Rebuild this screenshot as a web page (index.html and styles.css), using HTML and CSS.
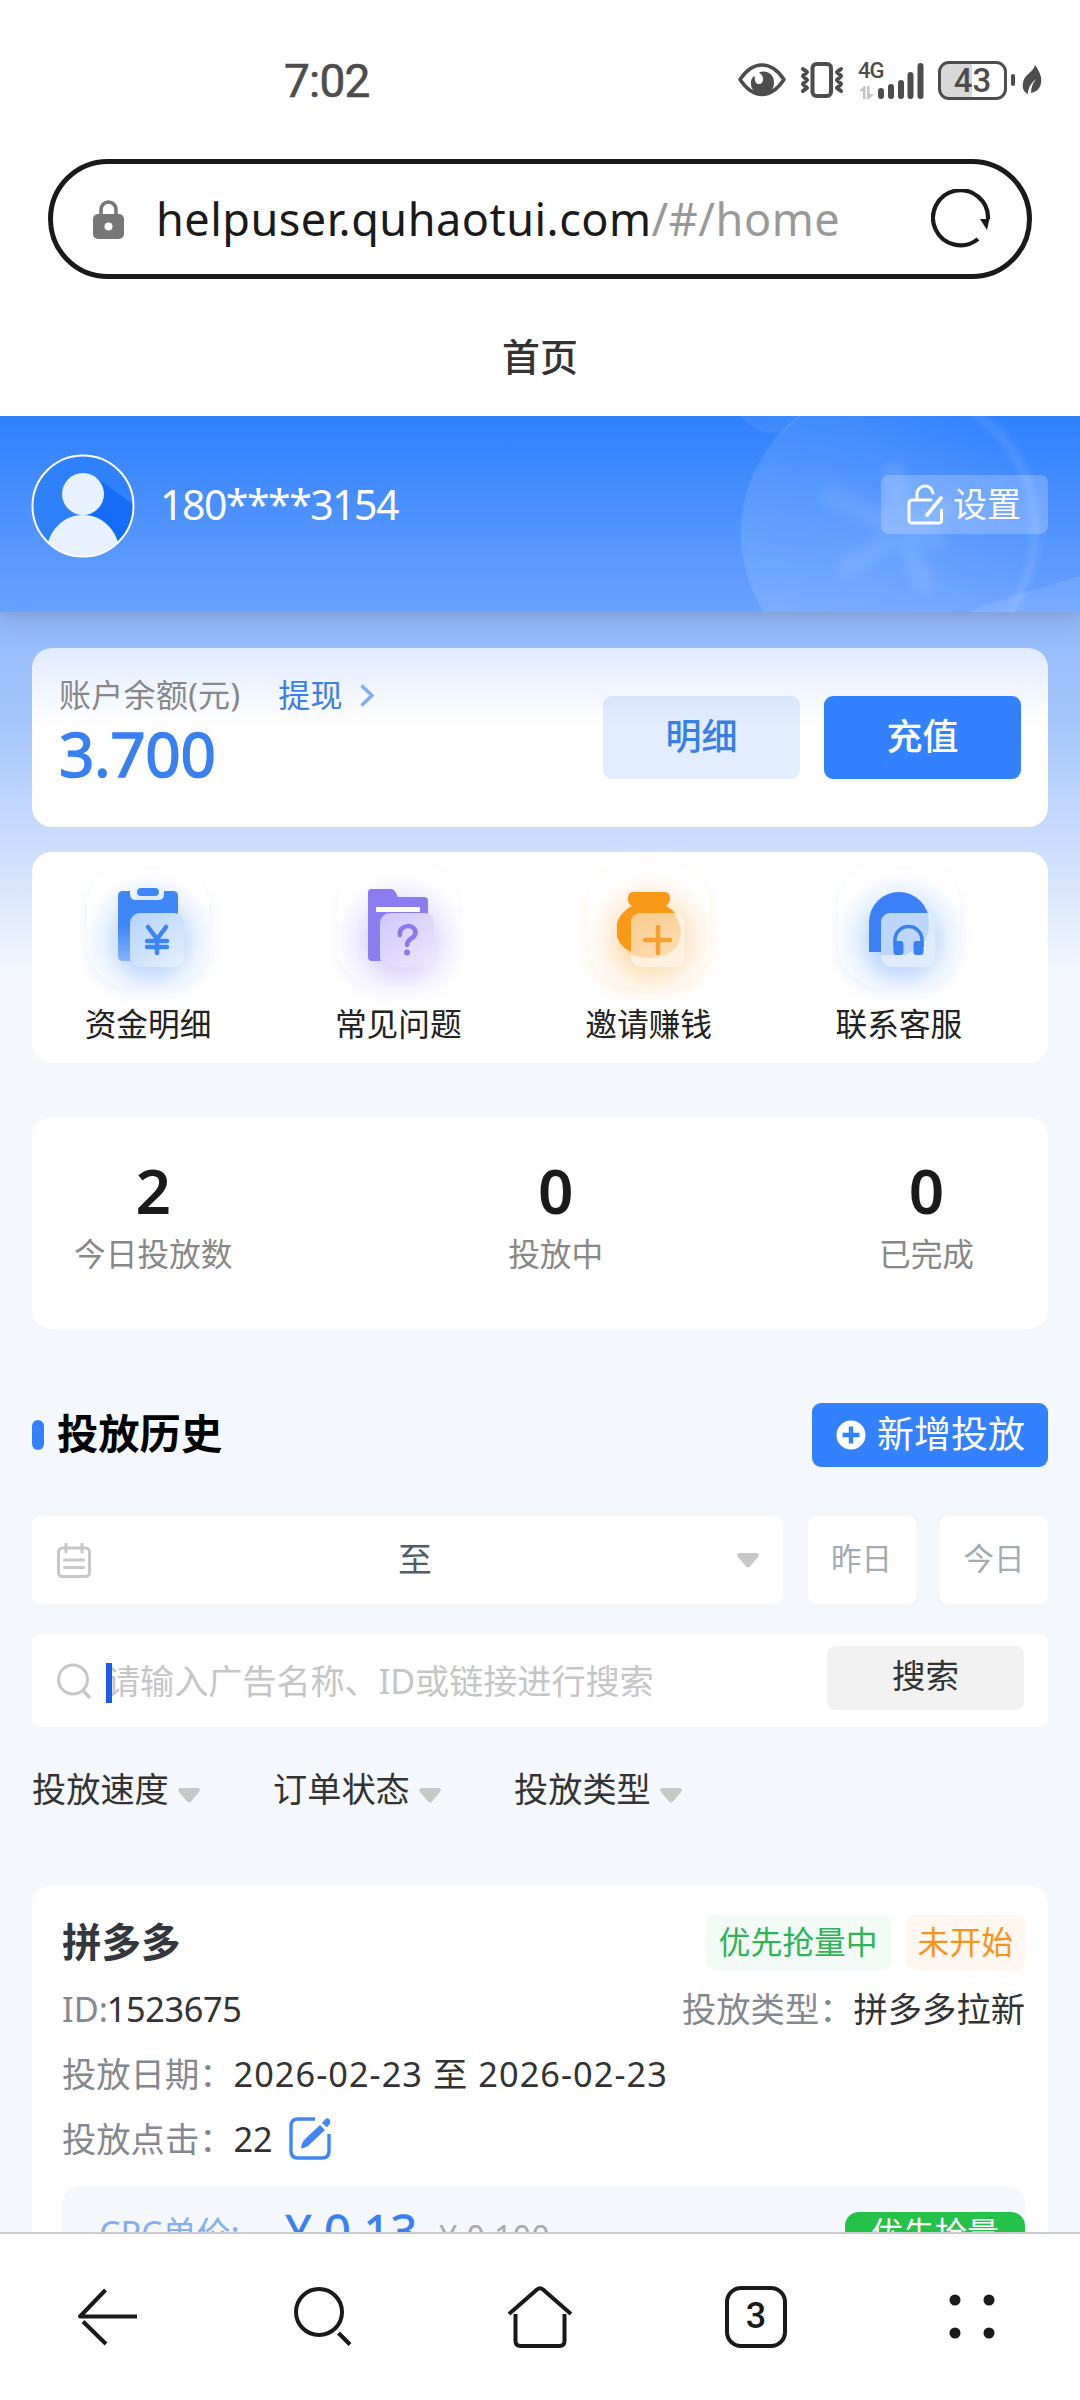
FILE: index.html
```html
<!DOCTYPE html>
<html lang="zh-CN">
<head>
<meta charset="utf-8">
<title>首页</title>
<link rel="stylesheet" href="styles.css">
</head>
<body>
<div class="screen">
  <div class="status">
    <span class="time">7:02</span>
    <div class="status-icons">
      <svg class="eye" width="48" height="34" viewBox="0 0 48 34"><path d="M2 16.5C9 6 16 2 24 2s15 4 22 14.500C39 27 32 31.500 24 31.500S9 27 2 16.500Z" fill="none" stroke="#4d4d4d" stroke-width="3.500" stroke-linejoin="round"/><path d="M21 9.500c7-3 15 1 15 10 0 8-5 12-12 12s-12-6-11-13c.5-3 2-5 4-5.500-1 5 1 8 4 8 5 0 6-8 0-11.500Z" fill="#4d4d4d"/></svg>
      <svg class="vibrate" width="44" height="36" viewBox="0 0 44 36"><g fill="none" stroke="#4d4d4d" stroke-width="4" stroke-linejoin="round" stroke-linecap="round"><rect x="12.500" y="2" width="18.500" height="32" rx="4"/><path d="M3 7l4 3-4 4 4 4-4 4 4 4-4 3M41 7l-4 3 4 4-4 4 4 4-4 4 4 3"/></g></svg>
      <div class="signal">
        <span class="net">4G</span>
        <svg width="66" height="37" viewBox="0 0 66 37"><g stroke="#4d4d4d" stroke-width="6" stroke-linecap="round"><path d="M23 29v5M33 25v9M43 21v13M52.500 13v21M62.500 4v30"/></g><path d="M5 37V29H1l5-5h1.500v13ZM9 24h2.500v8H16l-5 5H9Z" fill="#c4c4c4"/></svg>
      </div>
      <div class="battery"><span>43</span></div>
      <svg class="cell-tip" width="4" height="12" viewBox="0 0 4 12"><rect width="4" height="12" rx="2" fill="#4d4d4d"/></svg>
      <svg class="leaf" width="20" height="31" viewBox="0 0 20 31"><path d="M13 0c5 7 7 13 6 18-1 6-5 9-10 10 0-6 2-10 5-14C9 18 6 23 6 29 2 27 0 24 1 18 2 9 11 8 13 0Z" fill="#4d4d4d"/></svg>
    </div>
  </div>

  <div class="url-bar">
    <svg class="lock" width="31" height="39" viewBox="0 0 31 39"><path d="M8 16V9.500a7.500 7.500 0 0 1 15 0V16" fill="none" stroke="#777" stroke-width="3.600"/><rect x="0" y="14" width="31" height="25" rx="5" fill="#777"/><circle cx="15.500" cy="26.500" r="4" fill="#fff"/></svg>
    <span class="url">helpuser.quhaotui.com<span class="path">/#/home</span></span>
    <svg class="reload" width="60" height="60" viewBox="0 0 60 60"><path d="M47 50A27.500 27.500 0 1 1 57 30" fill="none" stroke="#1a1a1a" stroke-width="4.200"/><path d="M49 30h9.500l-2.500 11Z" fill="#1a1a1a"/></svg>
  </div>

  <div class="title">首页</div>

  <div class="user">
    <svg class="coin" width="360" height="196" viewBox="0 0 360 196">
      <defs>
        <linearGradient id="disc" x1="0" y1=".7" x2="1" y2=".3"><stop offset="0" stop-color="#fff" stop-opacity=".12"/><stop offset=".55" stop-color="#fff" stop-opacity=".08"/><stop offset="1" stop-color="#fff" stop-opacity="0"/></linearGradient>
      </defs>
      <circle cx="169" cy="117" r="148" fill="url(#disc)"/>
      <g class="rim"><path d="M205-26A143 143 0 0 1 258 228" fill="none" stroke="#fff" stroke-width="10"/></g>
      <path d="M20 0h60L62 18Q35 18 20 0Z" fill="#fff" fill-opacity=".07"/>
      <path d="M262 190L360 160V196H250Z" fill="#fff" fill-opacity=".1"/>
      <g class="star"><path d="M175 56L180 112L204 165M110 80L180 112L215 124M130 150L180 118L225 92" fill="none" stroke="#fff" stroke-width="22" stroke-linecap="round" stroke-linejoin="round"/></g>
    </svg>
    <svg class="avatar" width="104" height="104" viewBox="0 0 104 104">
      <defs><clipPath id="face"><circle cx="52" cy="52" r="50"/></clipPath></defs>
      <g clip-path="url(#face)"><rect width="104" height="104" fill="#2f80fb"/><path d="M66 24L104 52V90L86 94L52 66Z" fill="#156cf6"/><circle cx="52" cy="40" r="21" fill="#e8f1fe"/><path d="M16 92C20 74 34 61 52 61s32 13 36 31v14H16Z" fill="#e8f1fe"/></g>
      <circle cx="52" cy="52" r="50.500" fill="none" stroke="#fff" stroke-width="2"/>
    </svg>
    <span class="phone">180****3154</span>
    <div class="settings">
      <svg width="36" height="41" viewBox="0 0 36 41"><g fill="none" stroke="#fff" stroke-width="3" stroke-linecap="round" stroke-linejoin="round"><path d="M24 16H5a3 3 0 0 0-3 3v17a3 3 0 0 0 3 3h27a2.500 2.500 0 0 0 2.500-3V26M10 15.500V11a8 8 0 0 1 16-2"/><path d="M34 14L20 31" stroke-width="3.600"/></g></svg>
      <span>设置</span>
    </div>
  </div>

  <div class="content">
    <div class="card balance">
      <div class="amount">
        <div class="amount-head"><span>账户余额(元)</span><span class="withdraw">提现</span><svg width="14" height="23" viewBox="0 0 14 23"><path d="M1.500 1.500L12 11.500L1.500 21.500" fill="none" stroke="#85abf3" stroke-width="3.500"/></svg></div>
        <div class="sum">3.700</div>
      </div>
      <div class="btn light">明细</div>
      <div class="btn solid">充值</div>
    </div>

    <div class="card menu">
      <div class="menu-item blue">
        <div class="tile"><svg width="76" height="90" viewBox="0 0 76 90">
          <defs><linearGradient id="p1" x1="0" y1="0" x2=".8" y2="1"><stop offset="0" stop-color="#b4d2fd"/><stop offset="1" stop-color="#e2eefe"/></linearGradient><linearGradient id="b1" x1="0" y1="0" x2="0" y2="1"><stop offset=".5" stop-color="#3f87f6"/><stop offset="1" stop-color="#86b4fa"/></linearGradient></defs>
          <path d="M7 6H14V9q0 6 6 6h22q6 0 6-6V6H57q5 0 5 5V76H7q-5 0-5-5V11Q2 6 7 6Z" fill="url(#b1)"/><rect x="21" y="3" width="22" height="8" rx="4" fill="#3f87f6"/>
          <rect x="14" y="28" width="54" height="54" rx="10" fill="url(#p1)"/>
          <path d="M32 42L41 54L50 42M41 54V68M31 56H51M31 62H51" fill="none" stroke="#3d85f5" stroke-width="4.500" stroke-linecap="round"/></svg></div>
        <span>资金明细</span>
      </div>
      <div class="menu-item purple">
        <div class="tile"><svg width="76" height="90" viewBox="0 0 76 90">
          <defs><linearGradient id="p2" x1="0" y1="0" x2=".8" y2="1"><stop offset="0" stop-color="#cfc6fb"/><stop offset="1" stop-color="#ebe5fe"/></linearGradient></defs>
          <path d="M5 4H25q3 0 5 4l2 4H58q4 0 4 4V76H6q-4 0-4-4V8Q2 4 5 4Z" fill="#8d7cf0"/><rect x="10" y="22" width="44" height="5" rx="1" fill="#fff"/>
          <rect x="14" y="28" width="54" height="54" rx="10" fill="url(#p2)"/>
          <path d="M34 50C32 39 50 38 49.500 48C49 54 41 53 41 60" fill="none" stroke="#8a78ec" stroke-width="4.500" stroke-linecap="round"/><circle cx="41" cy="67.500" r="3" fill="#8a78ec"/></svg></div>
        <span>常见问题</span>
      </div>
      <div class="menu-item orange">
        <div class="tile"><svg width="76" height="90" viewBox="-2 0 76 90">
          <defs><linearGradient id="p3" x1="0" y1="0" x2=".7" y2="1"><stop offset="0" stop-color="#fcca8a"/><stop offset="1" stop-color="#fddcb2"/></linearGradient></defs>
          <path d="M14 7H46q5 0 5 6 0 4-4 8C58 27 63 36 63 45c0 16-13 27-32 27-4 0-9-1-13-3C6 66-3 57-3 45-3 36 2 27 13 21c-4-3-4-5-4-8q0-6 5-6Z" fill="#f89a17"/>
          <rect x="12" y="28" width="54" height="54" rx="10" fill="#fff1e0"/><path d="M22 28H55Q66 44 59 60Q51 72 32 73Q20 73 12 69V38Q12 28 22 28Z" fill="url(#p3)"/>
          <path d="M26 55H51M39 42V68" stroke="#f5a02e" stroke-width="4.500" stroke-linecap="round"/></svg></div>
        <span>邀请赚钱</span>
      </div>
      <div class="menu-item blue">
        <div class="tile"><svg width="76" height="90" viewBox="0 0 76 90">
          <path d="M2 67V37a30 30 0 0 1 60 0V67Z" fill="#3b80f4"/>
          <rect x="14" y="28" width="54" height="54" rx="10" fill="#dfebfe"/><path d="M24 28H61Q64 50 56 58L40 70H14V38Q14 28 24 28Z" fill="#b5d0fc" fill-opacity=".8"/>
          <path d="M28 62V55a13.500 13.500 0 0 1 27 0V62" fill="none" stroke="#3b80f0" stroke-width="3.500"/><path d="M26.500 56h7q3 0 3 3v8q0 3-3 3h-4q-3 0-3-3ZM56.500 56h-7q-3 0-3 3v8q0 3 3 3h4q3 0 3-3Z" fill="#3b80f0"/></svg></div>
        <span>联系客服</span>
      </div>
    </div>

    <div class="card stats">
      <div class="stat"><b>2</b><span>今日投放数</span></div>
      <div class="stat"><b>0</b><span>投放中</span></div>
      <div class="stat"><b>0</b><span>已完成</span></div>
    </div>

    <div class="section-head">
      <i class="mark"></i><h2>投放历史</h2>
      <div class="add"><svg width="30" height="30" viewBox="0 0 30 30"><circle cx="15" cy="15" r="14.500" fill="#fff"/><path d="M6.500 15h17M15 6.500v17" stroke="#3481ff" stroke-width="4.400"/></svg><span>新增投放</span></div>
    </div>

    <div class="dates">
      <div class="range">
        <svg width="34" height="35" viewBox="0 0 34 35"><g fill="none" stroke="#c8c8c8" stroke-width="3"><rect x="1.500" y="5" width="31" height="28.500" rx="4"/><path d="M9 0v9M25 0v9M7.500 17h19M7.500 24.500h19" stroke-linecap="round"/></g></svg>
        <span>至</span>
        <svg width="22" height="15" viewBox="0 0 22 15"><path d="M2 0H20q3 1 1 4L13 13.500q-2 2-4 0L1 4Q-1 1 2 0Z" fill="#c8c8c8"/></svg>
      </div>
      <div class="day">昨日</div>
      <div class="day">今日</div>
    </div>

    <div class="search">
      <svg width="34" height="36" viewBox="0 0 34 36"><g fill="none" stroke="#c8c8c8" stroke-width="3"><circle cx="16" cy="16.500" r="14.500"/><path d="M26 27.500L33 35" stroke-width="3.500"/></g></svg>
      <i class="caret"></i>
      <span class="hint">请输入广告名称、ID或链接进行搜索</span>
      <div class="go">搜索</div>
    </div>

    <div class="filters">
      <div class="filter"><span>投放速度</span><svg width="22" height="15" viewBox="0 0 22 15"><path d="M2 0H20q3 1 1 4L13 13.500q-2 2-4 0L1 4Q-1 1 2 0Z" fill="#c8c8c8"/></svg></div>
      <div class="filter"><span>订单状态</span><svg width="22" height="15" viewBox="0 0 22 15"><path d="M2 0H20q3 1 1 4L13 13.500q-2 2-4 0L1 4Q-1 1 2 0Z" fill="#c8c8c8"/></svg></div>
      <div class="filter"><span>投放类型</span><svg width="22" height="15" viewBox="0 0 22 15"><path d="M2 0H20q3 1 1 4L13 13.500q-2 2-4 0L1 4Q-1 1 2 0Z" fill="#c8c8c8"/></svg></div>
    </div>

    <div class="card order">
      <div class="order-head"><h3>拼多多</h3><span class="tag green">优先抢量中</span><span class="tag amber">未开始</span></div>
      <div class="line"><span>ID:</span><em class="id">1523675</em><span class="end">投放类型：</span><em>拼多多拉新</em></div>
      <div class="line"><span>投放日期：</span><em class="num">2026-02-23 至 2026-02-23</em></div>
      <div class="line"><span>投放点击：</span><em>22</em>
        <svg class="edit" width="42" height="43" viewBox="0 0 42 43"><g fill="none" stroke="#4086f5" stroke-width="3.400"><path d="M26 2H9Q2 2 2 9V34q0 7 7 7H33q7 0 7-7V17"/></g><path d="M31 8L36 13L19 29Q15 31 12 31.500Q12 27 15 23ZM33 6L36 2.500Q39 0 41 3Q42 6 40 8L38 10.500Z" fill="#4086f5"/></svg></div>
      <div class="price">
        <span class="cpc">CPC单价:</span><span class="now">¥ 0.13</span><span class="was">¥ 0.100</span><span class="grab">优先抢量</span>
      </div>
    </div>
  </div>

  <div class="nav">
    <div><svg width="62" height="62" viewBox="0 0 62 62"><path d="M60 30.500H3L28.500 4M6 35.500L29 58" fill="none" stroke="#1a1a1a" stroke-width="4" stroke-linejoin="round"/></svg></div>
    <div><svg width="62" height="62" viewBox="0 0 62 62"><g fill="none" stroke="#1a1a1a" stroke-width="4"><circle cx="26" cy="26" r="23"/><path d="M45.500 47L57 58.500"/></g></svg></div>
    <div><svg width="66" height="64" viewBox="0 0 66 64"><g fill="none" stroke="#1a1a1a" stroke-width="4" stroke-linejoin="round"><path d="M2 29L30 4.500q3-2.500 6 0L64 29"/><path d="M8.500 29V56q0 5 5 5h39q5 0 5-5V29"/></g></svg></div>
    <div><span class="tabs">3</span></div>
    <div><svg width="46" height="46" viewBox="0 0 46 46"><g fill="#1a1a1a"><circle cx="6" cy="6" r="5.500"/><circle cx="40" cy="6" r="5.500"/><circle cx="6" cy="39" r="5.500"/><circle cx="40" cy="39" r="5.500"/></g></svg></div>
  </div>
</div>
</body>
</html>
```
FILE: styles.css
```css
* { box-sizing: border-box; }
body { margin: 0; font-family: "Noto Sans", "Noto Sans CJK SC", sans-serif; color: #222; }
svg { display: block; flex: none; }
h2, h3 { margin: 0; }
em, i { font-style: normal; }
span { white-space: nowrap; }

.screen { width: 1080px; height: 2400px; display: flex; flex-direction: column; overflow: hidden; background: #fff; }
.screen > * { flex: none; }

.status { height: 159px; padding: 0 38px 0 284px; display: flex; justify-content: space-between; }
.time { font-family: Roboto, sans-serif; font-size: 46px; line-height: 54px; margin-top: 54px; color: #4d4d4d; letter-spacing: -.8px; -webkit-text-stroke: .6px #4d4d4d; }
.status-icons { display: flex; align-items: center; height: 40px; margin-top: 60px; color: #4d4d4d; }
.vibrate { margin-left: 14px; }
.signal { display: flex; position: relative; margin-left: 14px; }
.net { position: absolute; left: 0; top: -3px; font: 500 22px/24px Roboto, sans-serif; letter-spacing: -1px; }
.battery { width: 69px; height: 39px; margin-left: 14px; border: 3px solid #4d4d4d; border-radius: 11px; background: linear-gradient(90deg, #d8d8d8 50%, #fff 50%); text-align: center; font: 500 33px/34px Roboto, sans-serif; }
.cell-tip { margin-left: 4px; }
.leaf { margin-left: 7px; }

.url-bar { height: 120px; margin: 0 48px; padding: 0 36px 0 40px; border: 5px solid #1a1a1a; border-radius: 60px; display: flex; align-items: center; }
.url { flex: 1; margin-left: 32px; font-size: 45px; line-height: 60px; letter-spacing: .5px; color: #1a1a1a; }
.path { color: #999; }

.title { height: 137px; padding-top: 48px; text-align: center; font-size: 38px; line-height: 58px; font-weight: 500; color: #333; }

.user { position: relative; z-index: 1; height: 196px; padding: 38px 32px 0 31px; display: flex; align-items: flex-start; background: linear-gradient(#2f80ff, #6aa2ff); box-shadow: 0 4px 24px rgba(90, 100, 120, .4); clip-path: inset(0 0 -40px 0); color: #fff; }
.coin { position: absolute; right: 0; top: 0; }
.rim { opacity: .09; filter: blur(3px); }
.star { opacity: .08; filter: blur(5px); }
.phone { flex: 1; margin: 22px 0 0 25px; font-size: 41px; line-height: 56px; letter-spacing: -1.500px; }
.settings { position: relative; width: 167px; height: 59px; margin-top: 21px; padding-left: 26px; display: flex; align-items: center; gap: 10px; border-radius: 8px; background: rgba(255, 255, 255, .22); font-size: 34px; line-height: 50px; }
.settings span { margin-bottom: 2px; }

.content { height: 1620px; padding: 36px 32px 0; overflow: hidden; display: flex; flex-direction: column; background: linear-gradient(#92b9fb 0, #a5c6fc 110px, #cbddfd 230px, #f4f8fd 365px); }
.content > * { flex: none; }
.card { border-radius: 20px; background: #fff; }

.balance { height: 179px; padding: 0 27px; display: flex; align-items: center; background: linear-gradient(#e0ebff, #fff 78px); }
.amount { flex: 1; height: 131px; }
.amount-head { display: flex; align-items: center; height: 46px; font-size: 32px; line-height: 46px; letter-spacing: .3px; color: #888; }
.withdraw { margin: 0 17px 0 38px; color: #3d7fe8; }
.sum { margin-top: -2px; font-size: 62px; line-height: 74px; letter-spacing: -.4px; color: #3a80f2; -webkit-text-stroke: 1.500px #3a80f2; }
.btn { width: 197px; height: 83px; border-radius: 9px; text-align: center; font-size: 36px; line-height: 81px; font-weight: 500; }
.light { background: rgba(52, 129, 255, .14); color: #3a7fe8; }
.solid { margin-left: 24px; background: #3481ff; color: #fff; }

.menu { height: 211px; margin-top: 25px; display: flex; gap: 18.300px; }
.menu-item { width: 232px; padding-top: 11px; display: flex; flex-direction: column; align-items: center; font-size: 31.700px; line-height: 46px; }
.tile { width: 122px; height: 124px; margin-bottom: 14px; padding: 22px 0 0 29px; border-radius: 44px; }
.blue .tile { background: radial-gradient(circle at 52% 62%, #c4dbfe 28%, #e9f2ff 48%, #fff 68%); box-shadow: 0 6px 14px rgba(63, 135, 246, .12); }
.purple .tile { background: radial-gradient(circle at 52% 62%, #ddd6fd 26%, #f3f0ff 48%, #fff 68%); box-shadow: 0 6px 14px rgba(147, 125, 240, .1); }
.orange .tile { background: radial-gradient(circle at 52% 62%, #fde0bb 26%, #fff4e8 48%, #fff 68%); box-shadow: 0 6px 14px rgba(248, 154, 23, .14); }

.stats { height: 212px; margin-top: 54px; padding: 36px 74px 0 42px; display: flex; justify-content: space-between; }
.stat { display: flex; flex-direction: column; align-items: center; font-size: 31.700px; line-height: 46px; color: #888; }
.stat b { font-size: 62px; line-height: 74px; font-weight: 600; margin-bottom: 4px; color: #1a1a1a; }

.section-head { height: 64px; margin-top: 74px; display: flex; align-items: center; }
.mark { width: 12px; height: 30px; border-radius: 6px; background: #3481ff; }
.section-head h2 { flex: 1; margin: 0 0 4px 13px; font-size: 41.300px; line-height: 62px; font-weight: 600; color: #000; }
.add { width: 236px; height: 64px; padding-left: 24px; display: flex; align-items: center; gap: 11px; border-radius: 9px; background: #3481ff; color: #fff; font-size: 37px; line-height: 60px; }
.add span { margin-bottom: 3px; }

.dates { height: 88px; margin-top: 49px; display: flex; gap: 24.500px; }
.range { flex: 1; padding: 0 24px 0 25px; display: flex; align-items: center; justify-content: space-between; border-radius: 9px; background: #fff; font-size: 34px; color: #515c68; }
.range span { margin: 0 0 3px 2px; line-height: 50px; }
.day { width: 108px; border-radius: 9px; background: #fff; text-align: center; font-size: 30.500px; line-height: 85px; color: #a3abb3; }

.search { height: 93px; margin-top: 30px; padding: 0 24px 0 25px; display: flex; align-items: center; border-radius: 9px; background: #fff; }
.caret { width: 6px; height: 40px; margin: 5px 0 0 15px; background: #1c5cec; position: relative; z-index: 1; }
.hint { flex: 1; margin-left: -6px; font-size: 34.200px; line-height: 50px; letter-spacing: -.1px; color: #c6c6c6; }
.go { width: 197px; height: 64px; margin-bottom: 5px; border-radius: 8px; background: #f2f2f2; text-align: center; font-size: 33.500px; line-height: 58px; color: #333; }

.filters { height: 50px; margin-top: 37px; display: flex; }
.filter { width: 241px; display: flex; align-items: center; gap: 9px; font-size: 34.200px; line-height: 50px; color: #333; }
.filter svg { margin-top: 12px; }

.order { height: 480px; margin-top: 71px; padding: 30px 23px 0 30px; }
.order-head { height: 55px; display: flex; align-items: center; gap: 15px; }
.order-head h3 { flex: 1; font-size: 39.500px; line-height: 53px; font-weight: 600; color: #35373f; }
.tag { height: 55px; padding: 0 13px; border-radius: 8px; font-size: 31.800px; line-height: 54px; }
.tag.green { background: #f3fbf6; color: #2fb457; }
.tag.amber { padding: 0 12px; background: #fff7f0; color: #f7941d; }
.line { height: 65px; display: flex; align-items: center; font-size: 34.300px; line-height: 50px; color: #858890; }
.order-head + .line { margin-top: 6px; }
.line em { color: #333; }
.line .id { margin-left: -1px; letter-spacing: -.4px; }
.line .num { letter-spacing: 1.050px; }
.end { margin-left: auto; }
.edit { margin-left: 16px; }
.price { height: 180px; margin-top: 15px; padding: 22px 0 0 37px; display: flex; border-radius: 18px; background: #f4f7fc; }
.cpc { width: 186px; font-size: 34px; line-height: 50px; color: #85aff0; }
.now { width: 154px; font-size: 47px; line-height: 46px; color: #3a80f2; -webkit-text-stroke: .7px #3a80f2; }
.was { font-size: 32px; line-height: 58px; letter-spacing: .4px; color: #aaa; }
.grab { width: 180px; height: 64px; margin: 4px 0 0 auto; border-radius: 14px; background: #25c24a; color: #fff; text-align: center; font-size: 32px; line-height: 42px; }

.nav { height: 168px; border-top: 2px solid #ccc; display: grid; grid-template-columns: repeat(5, 216px); background: #fff; }
.nav > div { height: 166px; display: flex; justify-content: center; align-items: center; }
.tabs { width: 62px; height: 62px; border: 4px solid #1a1a1a; border-radius: 16px; text-align: center; font: 500 36px/52px Roboto, sans-serif; color: #1a1a1a; }
```
